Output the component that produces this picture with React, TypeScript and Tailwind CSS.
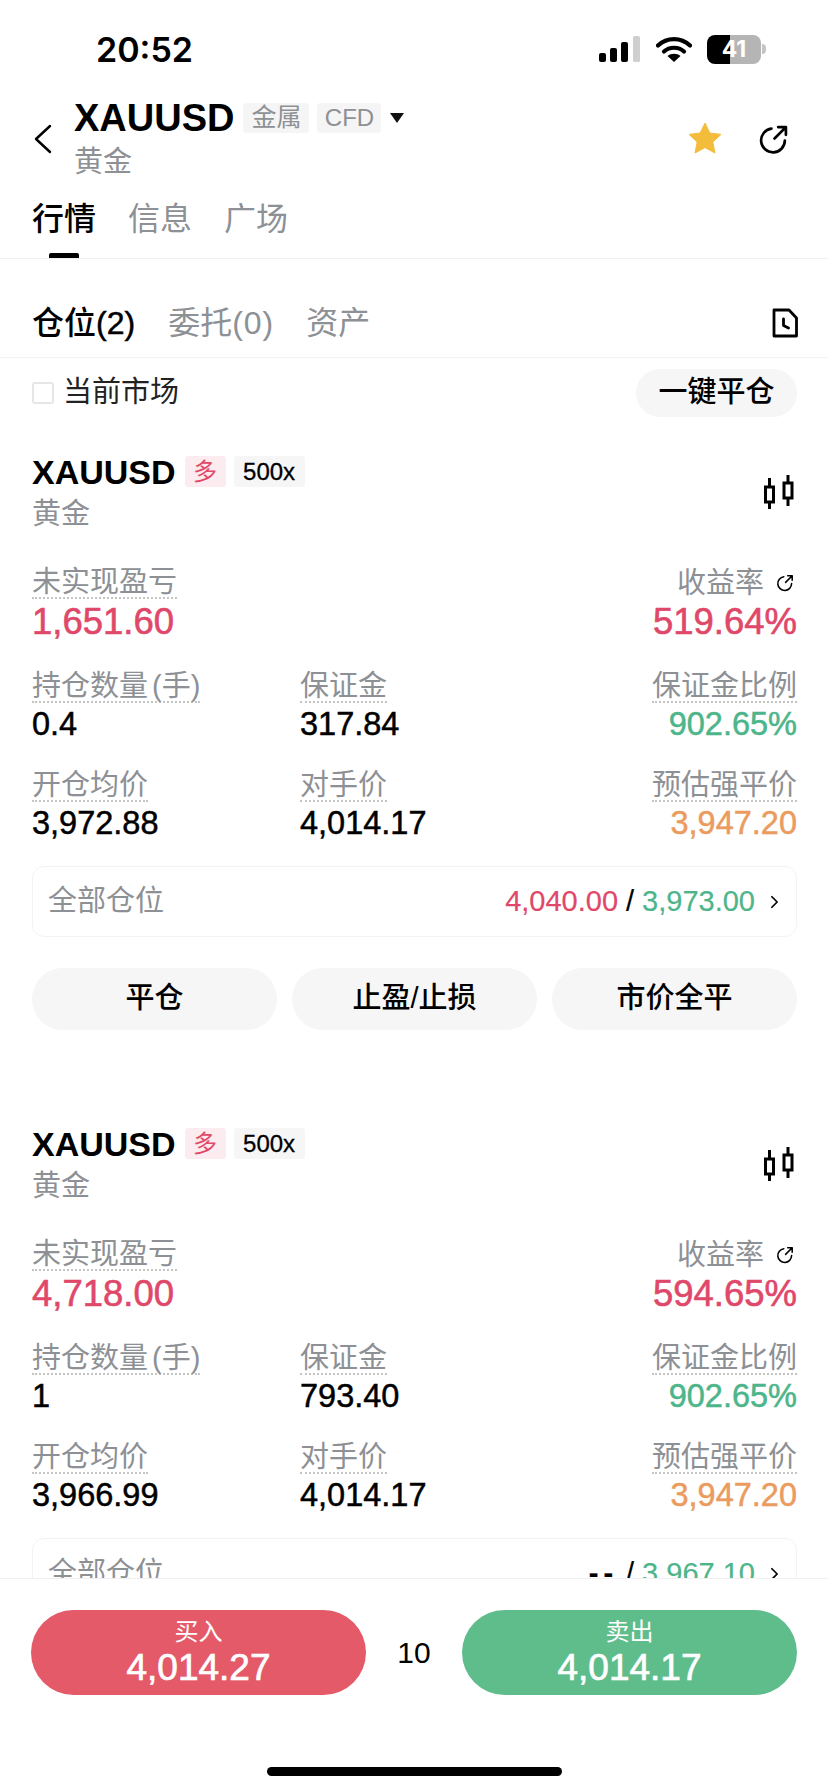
import type { ReactNode } from "react";

const positions = [
  {
    pnl: "1,651.60",
    rate: "519.64%",
    lots: "0.4",
    margin: "317.84",
    open: "3,972.88",
    tp: "4,040.00",
    sl: "3,973.00",
  },
  {
    pnl: "4,718.00",
    rate: "594.65%",
    lots: "1",
    margin: "793.40",
    open: "3,966.99",
    tp: "--",
    sl: "3,967.10",
  },
];

function ShareIcon({ className }: { className: string }) {
  return (
    <svg viewBox="0 0 30 30" fill="none" stroke="currentColor" strokeWidth="2.6" strokeLinecap="round" strokeLinejoin="round" className={className}>
      <path d="M13 4.5A11.5 11.5 0 1 0 26 16" />
      <path d="M16 14L27 3M19.5 3H27V10.5" />
    </svg>
  );
}

function CandleIcon() {
  return (
    <svg viewBox="0 0 30 34" fill="none" stroke="currentColor" strokeWidth="3" className="mb-[4px] mr-[3px] h-[34px] w-[30px] text-black">
      <rect x="1.5" y="12" width="8" height="15" />
      <path d="M5.5 3V12M5.5 27V34" />
      <rect x="20" y="8" width="8" height="15" />
      <path d="M24 0V8M24 23V31" />
    </svg>
  );
}

function StatusBar() {
  return (
    <div className="flex h-[98px] items-center pl-[96px] pr-[62px]">
      <span className="font-['Inter',sans-serif] text-[34px] font-semibold text-black">20:52</span>
      <div className="ml-auto flex items-center">
        <svg viewBox="0 0 42 26" className="h-[26px] w-[42px]">
          <rect x="0" y="17" width="7" height="9" rx="2" fill="#000" />
          <rect x="11" y="12" width="7" height="14" rx="2" fill="#000" />
          <rect x="22" y="6" width="7" height="20" rx="2" fill="#000" />
          <rect x="34" y="0" width="7" height="26" rx="1.5" fill="#cfcfcf" />
        </svg>
        <svg viewBox="0 0 36 26" className="ml-[15px] h-[26px] w-[36px]">
          <path d="M2 9.5C11 1 25 1 34 9.5" fill="none" stroke="#000" strokeWidth="4.2" strokeLinecap="round" />
          <path d="M8 15.5C13.5 10.5 22.5 10.5 28 15.5" fill="none" stroke="#000" strokeWidth="4.2" strokeLinecap="round" />
          <path d="M18 26L11.5 20C15 17 21 17 24.5 20Z" fill="#000" />
        </svg>
        <div className="ml-[15px] flex h-[29px] w-[54px] items-center justify-center overflow-hidden rounded-[8px] bg-[linear-gradient(90deg,#000_42%,#b5b5b5_42%)]">
          <span className="font-['Inter',sans-serif] text-[23px] font-bold text-white">41</span>
        </div>
        <div className="ml-[1px] h-[10px] w-[4px] rounded-r-full bg-[#c4c4c4]" />
      </div>
    </div>
  );
}

function Header() {
  return (
    <div className="flex h-[82px] items-center pl-[34px] pr-[39px]">
      <svg viewBox="0 0 18 30" fill="none" stroke="#000" strokeWidth="2.4" strokeLinecap="round" strokeLinejoin="round" className="h-[30px] w-[18px]">
        <path d="M16 2L2 15L16 28" />
      </svg>
      <div className="ml-[22px]">
        <div className="flex h-[40px] items-center">
          <span className="text-[38px] font-bold leading-none text-black">XAUUSD</span>
          <span className="ml-[9px] flex h-[30px] w-[66px] items-center justify-center rounded-[4px] bg-[#f5f5f5] text-[25px] text-[#8d9094]">金属</span>
          <span className="ml-[8px] flex h-[30px] w-[64px] items-center justify-center rounded-[4px] bg-[#f5f5f5] text-[24px] text-[#8d9094]">CFD</span>
          <svg viewBox="0 0 14 10" className="ml-[9px] h-[10px] w-[14px]">
            <path d="M0 0H14L7 10Z" fill="#111" />
          </svg>
        </div>
        <div className="mt-[6px] text-[29px] leading-[36px] text-[#8d9094]">黄金</div>
      </div>
      <svg viewBox="0 0 34 32" className="ml-auto h-[32px] w-[34px] -translate-y-px">
        <path d="M17 1L21.8 11L33 12.4L24.8 20L27 31L17 25.6L7 31L9.2 20L1 12.4L12.2 11Z" fill="#F4BC3B" stroke="#F4BC3B" strokeLinejoin="round" strokeWidth="1" />
      </svg>
      <ShareIcon className="ml-[36px] h-[31px] w-[31px] text-black" />
    </div>
  );
}

function MainTabs() {
  return (
    <div className="flex h-[79px] gap-[32px] border-b border-[#f0f0f0] pl-[32px] pt-[20px] text-[32px] leading-[38px] text-[#8d9094]">
      <div className="relative h-[58px] font-medium text-black">
        行情
        <div className="absolute bottom-0 left-[17px] h-[5px] w-[30px] rounded-t-[2px] bg-black" />
      </div>
      <div>信息</div>
      <div>广场</div>
    </div>
  );
}

function SubTabs() {
  return (
    <div className="flex h-[99px] items-end border-b border-[#f3f3f3] pb-[11px] pl-[32px] pr-[30px] text-[32px] leading-[46px] text-[#8d9094]">
      <span className="font-medium text-black">
        仓位<span className="[-webkit-text-stroke:0.5px]">(2)</span>
      </span>
      <span className="ml-[33px]">
        委托<span className="tracking-[1px]">(0)</span>
      </span>
      <span className="ml-[32px]">资产</span>
      <svg viewBox="0 0 26 30" fill="none" stroke="#000" strokeWidth="2.8" strokeLinejoin="round" strokeLinecap="round" className="mb-[8px] ml-auto h-[30px] w-[26px]">
        <path d="M2 2H17L24.5 10V28H2Z" />
        <path d="M11.5 11V17.5L16.5 20" />
      </svg>
    </div>
  );
}

function Filter() {
  return (
    <div className="flex h-[68px] items-center pl-[32px] pr-[31px] pt-[2px]">
      <div className="h-[22px] w-[22px] rounded-[3px] border-2 border-[#e6e6e6]" />
      <span className="ml-[9px] text-[29px] text-[#222]">当前市场</span>
      <button className="ml-auto h-[48px] w-[161px] rounded-full bg-[#f6f6f6] text-[29px] font-medium text-black">一键平仓</button>
    </div>
  );
}

function Label({ children }: { children: ReactNode }) {
  return (
    <span className="inline-block border-b-2 border-dotted border-[#c4c4c4] text-[29px] leading-[30px] text-[#8d9094] [word-spacing:-4px]">
      {children}
    </span>
  );
}

function Cell({ label, value, color, right }: { label: string; value: string; color: string; right?: boolean }) {
  return (
    <div className={right ? "text-right" : ""}>
      <Label>{label}</Label>
      <div className={`mt-px text-[32.5px] leading-[40px] [-webkit-text-stroke:0.5px] ${color}`}>{value}</div>
    </div>
  );
}

function Position({ pnl, rate, lots, margin, open, tp, sl }: (typeof positions)[number]) {
  return (
    <div className="h-[672px] shrink-0 pl-[32px] pr-[31px] pt-[30px]">
      <div className="flex items-center justify-between">
        <div>
          <div className="flex h-[31px] items-center">
            <span className="text-[34px] font-bold leading-none text-black">XAUUSD</span>
            <span className="ml-[9px] flex h-[31px] w-[41px] items-center justify-center rounded-[3px] bg-[#fcecef] text-[24px] text-[#e2486a]">多</span>
            <span className="ml-[8px] flex h-[31px] w-[71px] items-center justify-center rounded-[3px] bg-[#f6f6f6] text-[24px] text-black [-webkit-text-stroke:0.3px]">500x</span>
          </div>
          <div className="mt-[9px] text-[29px] leading-[36px] text-[#8d9094]">黄金</div>
        </div>
        <CandleIcon />
      </div>

      <div className="mt-[35px] flex items-start justify-between">
        <div>
          <Label>未实现盈亏</Label>
          <div className="mt-px text-[36.5px] leading-[44px] text-[#e0486a] [-webkit-text-stroke:0.6px]">{pnl}</div>
        </div>
        <div className="text-right">
          <div className="flex h-[32px] items-center justify-end text-[29px] leading-[30px] text-[#8d9094]">
            收益率
            <ShareIcon className="ml-[12px] mr-[3px] h-[18px] w-[18px] text-black" />
          </div>
          <div className="mt-px text-[36.5px] leading-[44px] text-[#e0486a] [-webkit-text-stroke:0.6px]">{rate}</div>
        </div>
      </div>

      <div className="mt-[27px] grid grid-cols-[268px_1fr_auto] gap-y-[26px]">
        <Cell label="持仓数量 (手)" value={lots} color="text-black" />
        <Cell label="保证金" value={margin} color="text-black" />
        <Cell label="保证金比例" value="902.65%" color="text-[#4db58a]" right />
        <Cell label="开仓均价" value={open} color="text-black" />
        <Cell label="对手价" value="4,014.17" color="text-black" />
        <Cell label="预估强平价" value="3,947.20" color="text-[#eb9b5e]" right />
      </div>

      <div className="mt-[23px] flex h-[71px] items-center rounded-[12px] border border-[#f3f3f3] pl-[15px] pr-[17px]">
        <span className="text-[29px] text-[#8d9094]">全部仓位</span>
        <div className="ml-auto flex items-center text-[29px] [-webkit-text-stroke:0.2px]">
          {tp === "--" ? (
            <span className="font-bold tracking-[5px] text-black">{tp}</span>
          ) : (
            <span className="text-[#e0486a]">{tp}</span>
          )}
          <span className="mx-[8px] font-medium text-black">/</span>
          <span className="text-[#4db58a]">{sl}</span>
          <svg viewBox="0 0 10 16" fill="none" stroke="#000" strokeWidth="2" strokeLinecap="round" strokeLinejoin="round" className="ml-[15px] h-[14px] w-[9px]">
            <path d="M2 2L8 8L2 14" />
          </svg>
        </div>
      </div>

      <div className="mt-[31px] grid grid-cols-3 gap-[15px]">
        {["平仓", "止盈/止损", "市价全平"].map((t) => (
          <button key={t} className="h-[62px] rounded-full bg-[#f6f6f6] text-[29px] font-medium text-black">
            {t}
          </button>
        ))}
      </div>
    </div>
  );
}

function TradeBar() {
  return (
    <div className="h-[214px] shrink-0 border-t border-[#f0f0f0] bg-white pl-[31px] pr-[31px] pt-[31px]">
      <div className="flex items-center">
        <div className="flex h-[85px] w-[335px] flex-col items-center justify-center rounded-full bg-[#e45a68] text-white">
          <span className="text-[24px] leading-[30px]">买入</span>
          <span className="text-[37px] font-medium leading-[42px] [-webkit-text-stroke:0.7px]">4,014.27</span>
        </div>
        <span className="flex-1 text-center text-[30px] text-black">10</span>
        <div className="flex h-[85px] w-[335px] flex-col items-center justify-center rounded-full bg-[#5fbd8c] text-white">
          <span className="text-[24px] leading-[30px]">卖出</span>
          <span className="text-[37px] font-medium leading-[42px] [-webkit-text-stroke:0.7px]">4,014.17</span>
        </div>
      </div>
      <div className="mx-auto mt-[72px] h-[9px] w-[295px] rounded-full bg-black" />
    </div>
  );
}

export default function App() {
  return (
    <div className="flex h-[1792px] w-[828px] flex-col overflow-hidden bg-white font-['Liberation_Sans','Noto_Sans_CJK_SC',sans-serif]">
      <StatusBar />
      <Header />
      <MainTabs />
      <SubTabs />
      <Filter />
      <div className="flex min-h-0 flex-1 flex-col overflow-hidden">
        {positions.map((p) => (
          <Position key={p.pnl} {...p} />
        ))}
      </div>
      <TradeBar />
    </div>
  );
}
